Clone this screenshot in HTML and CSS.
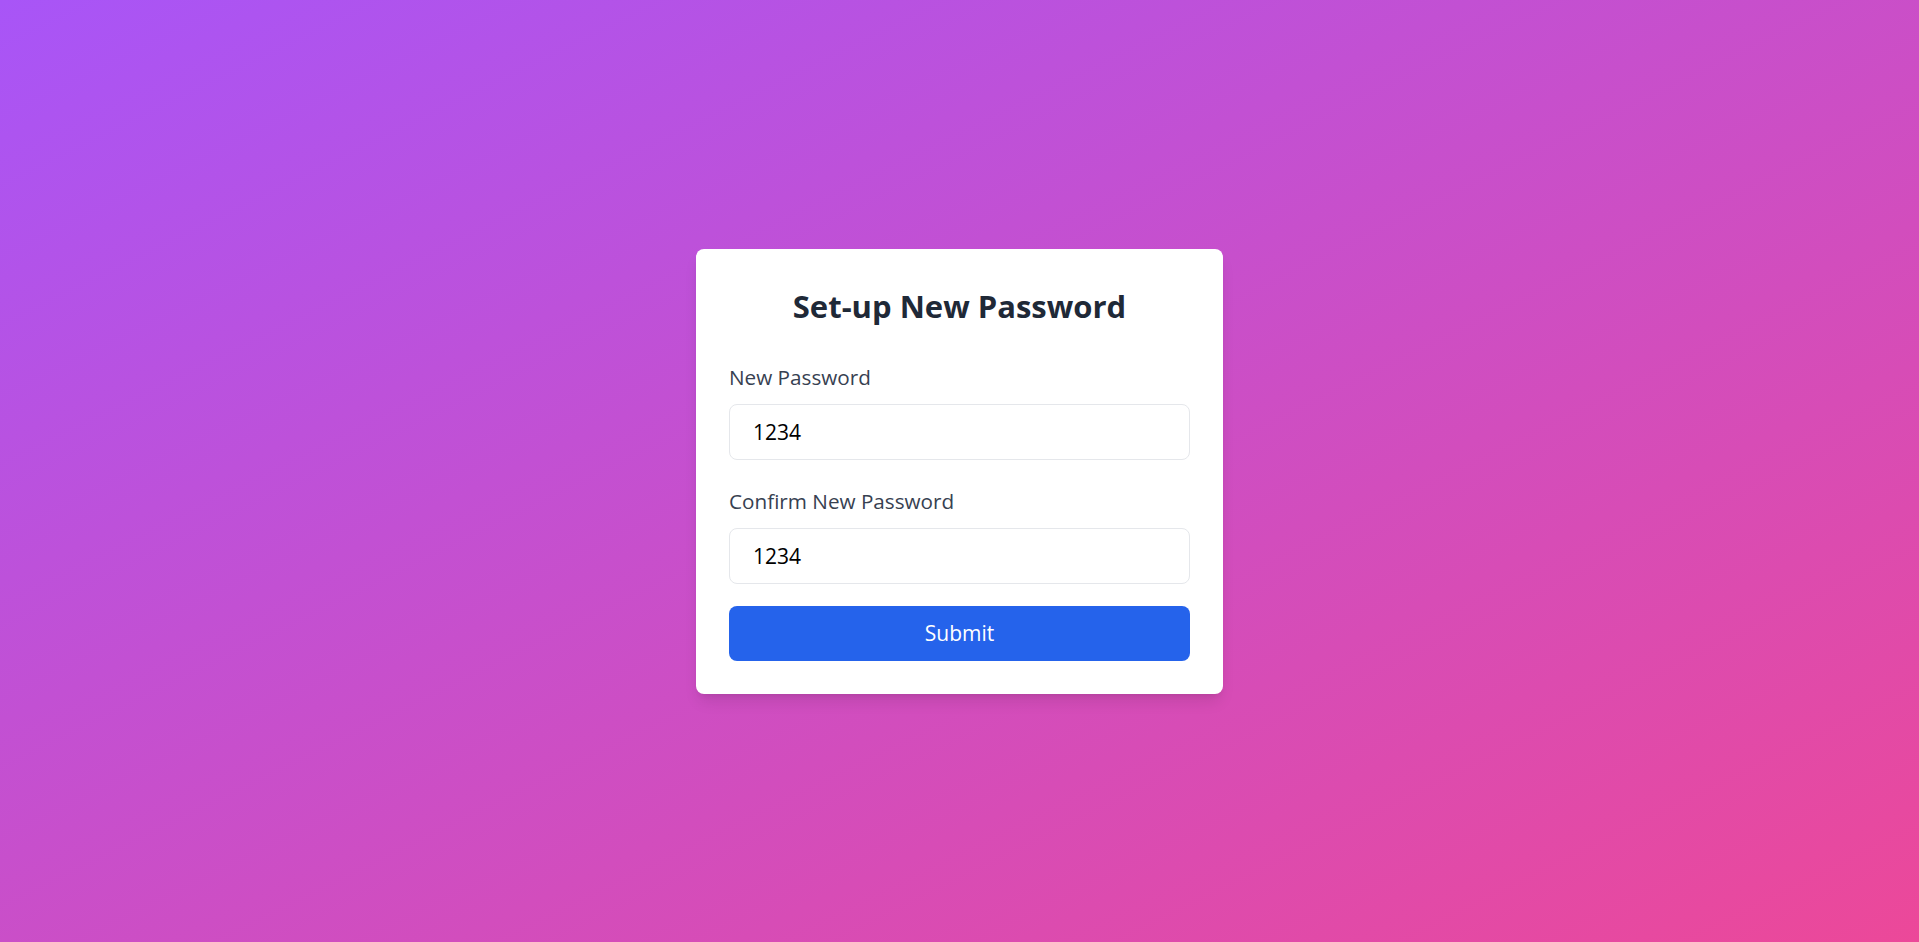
FILE: index.html
```html
<!DOCTYPE html>
<html lang="en">
<head>
<meta charset="utf-8">
<title>Set-up New Password</title>
<link rel="stylesheet" href="styles.css">
</head>
<body>
  <main class="page">
    <form class="card">
      <h1 class="title">Set-up New Password</h1>
      <label class="label" for="pw">New Password</label>
      <input class="field" id="pw" type="text" value="1234">
      <label class="label label-second" for="pw2">Confirm New Password</label>
      <input class="field" id="pw2" type="text" value="1234">
      <button class="submit" type="button">Submit</button>
    </form>
  </main>
</body>
</html>
```

FILE: styles.css
```css
* { box-sizing: border-box; }
html, body { margin: 0; padding: 0; }
body {
  font-family: "Open Sans", "Noto Sans", sans-serif;
}
.page {
  min-height: 100vh;
  display: flex;
  align-items: center;
  justify-content: center;
  background: linear-gradient(to bottom right, #a855f7, #ec4899);
}
.card {
  width: 527px;
  padding: 33px;
  background: #ffffff;
  border-radius: 8px;
  box-shadow: 0 10px 15px -3px rgba(0,0,0,0.1), 0 4px 6px -4px rgba(0,0,0,0.1);
  display: flex;
  flex-direction: column;
}
.title {
  margin: 4px 0 37px;
  font-size: 31px;
  line-height: 40px;
  font-weight: 700;
  color: #1f2937;
  text-align: center;
}
.label {
  font-size: 20.7px;
  line-height: 28px;
  color: #374151;
  margin-bottom: 13px;
}
.label-second { margin-top: 27px; }
.field {
  height: 56px;
  width: 100%;
  padding: 0 23px;
  border: 1px solid #e5e7eb;
  border-radius: 8px;
  font-family: inherit;
  font-size: 21px;
  color: #000000;
  background: #ffffff;
  outline: none;
}
.submit {
  margin-top: 22px;
  height: 55px;
  width: 100%;
  border: none;
  border-radius: 8px;
  background: #2563eb;
  color: #ffffff;
  font-family: inherit;
  font-size: 21px;
  cursor: pointer;
}
```
